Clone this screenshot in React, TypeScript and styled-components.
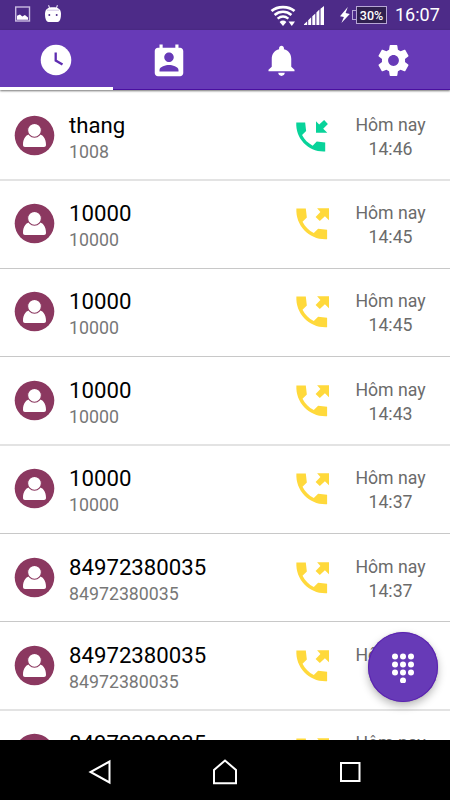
import React from "react";
import styled, { createGlobalStyle } from "styled-components";

const GlobalStyle = createGlobalStyle`
  * { box-sizing: border-box; }
  body { margin: 0; background: #fff; font-family: Roboto, "Noto Sans", sans-serif; }
  svg { display: block; flex: none; }
`;

const Screen = styled.div`
  position: relative;
  display: flex;
  flex-direction: column;
  width: 450px;
  height: 800px;
  overflow: hidden;
  background: #fff;
`;

const StatusBar = styled.header`
  display: flex;
  flex: none;
  align-items: center;
  height: 30px;
  padding: 0 10px 0 14px;
  background: #4d2b88;
  color: #fff;
`;

const Notices = styled.div`
  display: flex;
  flex: 1;
  gap: 14px;
`;

const Battery = styled.div`
  display: flex;
  align-items: center;
  margin-left: 11px;
`;

const BatteryTip = styled.span`
  width: 4px;
  height: 10px;
  border: 1px solid #b7a6d6;
  border-right: 0;
`;

const BatteryBody = styled.span`
  display: flex;
  align-items: center;
  justify-content: center;
  width: 31px;
  height: 18px;
  border: 1px solid #b7a6d6;
  background: #30204f;
  font-size: 12.5px;
  font-weight: 500;
`;

const Clock = styled.time`
  margin-left: 8px;
  width: 45px;
  font-size: 18px;
  line-height: 30px;
  white-space: nowrap;
`;

const Tabs = styled.nav`
  display: grid;
  position: relative;
  z-index: 1;
  flex: none;
  grid-template-columns: repeat(4, 1fr);
  height: 60px;
  background: #673ab7;
  box-shadow: 0 1px 2px rgba(0, 0, 0, 0.55);
`;

const Tab = styled.button<{ $active?: boolean; $drop?: number }>`
  display: flex;
  justify-content: center;
  align-items: center;
  padding: ${(p) => (p.$active ? 3 : 1) + (p.$drop ?? 0)}px 0 0;
  border: 0;
  border-bottom: ${(p) => (p.$active ? "3px solid #fff" : "1px solid #4a0fa0")};
  background: none;
`;

const List = styled.main`
  flex: 1;
  min-height: 0;
  padding-top: 2px;
  overflow: hidden;
`;

const Row = styled.article<{ $height: number; $soft?: boolean; $lifted?: boolean }>`
  display: grid;
  grid-template-columns: 69px 1fr 50px 91px;
  align-items: start;
  height: ${(p) => p.$height}px;
  padding: ${(p) => (p.$lifted ? 0 : 1)}px 14px 0 0;
  border-bottom: ${(p) => (p.$soft ? "2px solid #e3e3e3" : "1px solid #c8c8c8")};
`;

const AvatarSlot = styled.div`
  padding: 22px 0 0 14px;
`;

const Caller = styled.div`
  padding-top: 18px;
`;

const Name = styled.div`
  font-size: 22.2px;
  line-height: 28px;
  color: #000;
`;

const Number = styled.div`
  font-size: 17.75px;
  line-height: 27px;
  color: #777;
`;

const CallSlot = styled.div`
  padding-top: 25px;
`;

const When = styled.div`
  padding-top: 20px;
  font-size: 17.7px;
  line-height: 24px;
  text-align: center;
  color: #6b6b6b;
`;

const Fab = styled.button`
  position: absolute;
  right: 12.5px;
  top: 632.3px;
  z-index: 2;
  display: flex;
  align-items: center;
  justify-content: center;
  width: 70px;
  height: 70px;
  padding: 0;
  border: 0;
  border-radius: 50%;
  background: #673ab7;
  box-shadow: 0 4px 8px rgba(0, 0, 0, 0.27), 0 0 2px rgba(0, 0, 0, 0.15), inset 0 0 0 1px #5a22b0;
`;

const NavBar = styled.footer`
  position: relative;
  z-index: 1;
  display: flex;
  flex: none;
  justify-content: space-between;
  align-items: center;
  height: 60px;
  padding: 4px 86px 0;
  background: #000;
`;

const Avatar = () => (
  <svg width="41" height="41" viewBox="0 0 41 41">
    <circle cx="20.5" cy="20.5" r="19.8" fill="#8b3860" />
    <path
      d="M9 29.7C9 23.500 12 19.500 17 18.800h7c5 .7 8 4.700 8 10.900 0 1.500-.8 2.200-2 2.200H11c-1.200 0-2-.7-2-2.200z"
      fill="#fff"
    />
    <circle cx="20.5" cy="15.3" r="6.9" fill="#fff" stroke="#8b3860" strokeWidth="1.1" />
  </svg>
);

const HANDSET =
  "M21 15.46l-5.27-.61-2.52 2.52c-2.83-1.44-5.15-3.75-6.59-6.59l2.53-2.53L8.54 3H3.03C2.45 13.18 10.82 21.55 21 20.97v-5.51z";

const CallIcon = ({ incoming }: { incoming?: boolean }) =>
  incoming ? (
    <svg width="36" height="36" viewBox="0 0 36 36" fill="#08d39a">
      <path transform="translate(-3.6 -.3) scale(1.61)" d={HANDSET} />
      <path d="M21 14.7V3.3l3.2 3.2 4.9-4.4 3.8 3.8-4.7 4.8 4.1 4z" />
    </svg>
  ) : (
    <svg width="36" height="36" viewBox="0 0 36 36" fill="#ffd93b">
      <path transform="translate(-3.8 -2.6) scale(1.71)" d={HANDSET} />
      <path d="M34 2.3v12l-4.1-4-5.1 4.7-4.2-4 4.8-5-3.3-3.7z" />
    </svg>
  );

type Call = {
  name: string;
  number: string;
  time: string;
  height: number;
  incoming?: boolean;
  soft?: boolean;
  lifted?: boolean;
};

const calls: Call[] = [
  { name: "thang", number: "1008", time: "14:46", height: 89, incoming: true, soft: true },
  { name: "10000", number: "10000", time: "14:45", height: 88, lifted: true },
  { name: "10000", number: "10000", time: "14:45", height: 88, lifted: true },
  { name: "10000", number: "10000", time: "14:43", height: 89, soft: true },
  { name: "10000", number: "10000", time: "14:37", height: 88, lifted: true },
  { name: "84972380035", number: "84972380035", time: "14:37", height: 88 },
  { name: "84972380035", number: "84972380035", time: "14:37", height: 89, soft: true },
  { name: "84972380035", number: "84972380035", time: "14:37", height: 88, lifted: true },
];

const dots = [0, 8, 16].flatMap((y) => [0, 8, 16].map((x) => [x, y])).concat([[8, 24]]);

export default function App() {
  return (
    <Screen>
      <GlobalStyle />
      <StatusBar>
        <Notices>
          <svg width="17" height="18" viewBox="0 0 17 18">
            <rect x="1.7" y="2" width="13.8" height="14" fill="none" stroke="#c9bbe2" strokeWidth="1.4" />
            <path d="M3 14.8v-4l3-1.4 2.3 2.2 2.6-1.5 3.1 2.4v2.3z" fill="#fff" />
          </svg>
          <svg width="16" height="20" viewBox="0 0 16 20">
            <path d="M3.500 .2l1.700 4M12.500 .2l-1.700 4" stroke="#d9cfeb" strokeWidth="1.2" />
            <path d="M0 8.500C.3 4 3 2.300 8 2.300s7.700 1.700 8 6.200c0 5-1 8.400-3.500 8.400h-9C1 16.900 0 13.500 0 8.500z" fill="#fff" />
            <path d="M2 5.200h12" stroke="#cfc3e4" />
            <circle cx="4.300" cy="10" r="1" fill="#4d2b88" />
            <circle cx="11.700" cy="10" r="1" fill="#4d2b88" />
          </svg>
        </Notices>
        <svg width="60" height="30" viewBox="0 0 60 30" fill="none" stroke="#fff">
          <path d="M3.500 11C9.500 5.800 20.500 5.800 26.500 11" strokeWidth="2.800" />
          <path d="M6.600 14.900c5-4.200 11.800-4.200 16.800 0" strokeWidth="2.600" />
          <path d="M9.600 18.600c3.500-2.700 7.300-2.700 10.800 0" strokeWidth="2.400" />
          <path d="M11.600 22q3.400-2.800 6.800 0L15 26z" fill="#fff" stroke="none" />
          <path d="M20.500 21.500h6.500l-3.200 4.500z" fill="#fff" stroke="none" />
          <path
            d="M36 25v-.8l3.200-3V25zM40.200 25v-4.800l3-2.900V25zM44.300 25v-8.700l3-2.900V25zM48.400 25V12.400l3-2.900V25zM52.500 25V8.800L56 6v19z"
            fill="#fff"
            stroke="none"
          />
        </svg>
        <Battery>
          <svg width="13" height="18" viewBox="0 0 13 18" fill="#fff">
            <path d="M8.800 1L1 10.200l3.900.9L2.400 17l8.400-9-4.200-.9z" />
          </svg>
          <BatteryTip />
          <BatteryBody>30%</BatteryBody>
        </Battery>
        <Clock>16:07</Clock>
      </StatusBar>
      <Tabs>
        <Tab $active>
          <svg width="32" height="32" viewBox="0 0 32 32">
            <circle cx="16" cy="16" r="15.300" fill="#fff" />
            <path d="M15.700 8.500v8l6.800 4.100" fill="none" stroke="#5e2db1" strokeWidth="2.300" />
          </svg>
        </Tab>
        <Tab $drop={3}>
          <svg width="38" height="38" viewBox="0 0 24 24" fill="#fff">
            <path d="M19 3h-1V1h-2v2H8V1H6v2H5c-1.110 0-2 .9-2 2v14c0 1.100.89 2 2 2h14c1.100 0 2-.9 2-2V5c0-1.100-.9-2-2-2zm-7 3c1.660 0 3 1.340 3 3s-1.340 3-3 3-3-1.340-3-3 1.340-3 3-3zm6 12H6v-1c0-2 4-3.100 6-3.100s6 1.100 6 3.100v1z" />
          </svg>
        </Tab>
        <Tab>
          <svg width="39" height="37" viewBox="0 0 24 24" preserveAspectRatio="none" fill="#fff">
            <path d="M12 22c1.100 0 2-.9 2-2h-4c0 1.100.89 2 2 2zm6-6v-5c0-3.070-1.640-5.640-4.500-6.320V4c0-.83-.67-1.500-1.500-1.500s-1.500.67-1.500 1.500v.68C7.630 5.360 6 7.920 6 11v5l-2 2v1h16v-1l-2-2z" />
          </svg>
        </Tab>
        <Tab>
          <svg width="37" height="37" viewBox="0 0 24 24" fill="#fff">
            <path d="M19.430 12.980c.04-.32.07-.64.07-.98s-.03-.66-.07-.98l2.110-1.650c.19-.15.24-.42.12-.64l-2-3.460c-.12-.22-.39-.3-.61-.22l-2.490 1c-.52-.4-1.080-.73-1.690-.98l-.38-2.650C14.460 2.180 14.250 2 14 2h-4c-.25 0-.46.18-.49.42l-.38 2.650c-.61.25-1.170.59-1.690.98l-2.490-1c-.23-.09-.49 0-.61.22l-2 3.460c-.13.22-.07.49.12.64l2.110 1.650c-.04.32-.07.65-.07.98s.03.66.07.98l-2.110 1.650c-.19.15-.24.42-.12.64l2 3.460c.12.22.39.3.61.22l2.490-1c.52.4 1.080.73 1.690.98l.38 2.650c.03.24.24.42.49.42h4c.25 0 .46-.18.49-.42l.38-2.650c.61-.25 1.170-.59 1.690-.98l2.490 1c.23.09.49 0 .61-.22l2-3.460c.12-.22.07-.49-.12-.64l-2.110-1.650zM12 15.500c-1.930 0-3.500-1.570-3.500-3.500s1.570-3.500 3.500-3.500 3.500 1.570 3.500 3.500-1.570 3.500-3.500 3.500z" />
          </svg>
        </Tab>
      </Tabs>
      <List>
        {calls.map((c, i) => (
          <Row key={i} $height={c.height} $soft={c.soft} $lifted={c.lifted}>
            <AvatarSlot>
              <Avatar />
            </AvatarSlot>
            <Caller>
              <Name>{c.name}</Name>
              <Number>{c.number}</Number>
            </Caller>
            <CallSlot>
              <CallIcon incoming={c.incoming} />
            </CallSlot>
            <When>
              Hôm nay
              <br />
              {c.time}
            </When>
          </Row>
        ))}
      </List>
      <Fab aria-label="Dial">
        <svg width="24" height="32" viewBox="0 0 24 32" fill="#fff">
          {dots.map(([x, y]) => (
            <circle key={`${x}-${y}`} cx={x + 4} cy={y + 5.5} r="3" />
          ))}
        </svg>
      </Fab>
      <NavBar>
        <svg width="28" height="28" viewBox="0 0 28 28" fill="none" stroke="#fff" strokeWidth="2">
          <path d="M23.500 3.500v21L4.500 14z" />
        </svg>
        <svg width="28" height="28" viewBox="0 0 28 28" fill="none" stroke="#fff" strokeWidth="2">
          <path d="M3 25.200V12L14 2.500 25 12v13.200z" />
        </svg>
        <svg width="28" height="28" viewBox="0 0 28 28" fill="none" stroke="#fff" strokeWidth="2">
          <rect x="5" y="5" width="18.500" height="18" />
        </svg>
      </NavBar>
    </Screen>
  );
}
